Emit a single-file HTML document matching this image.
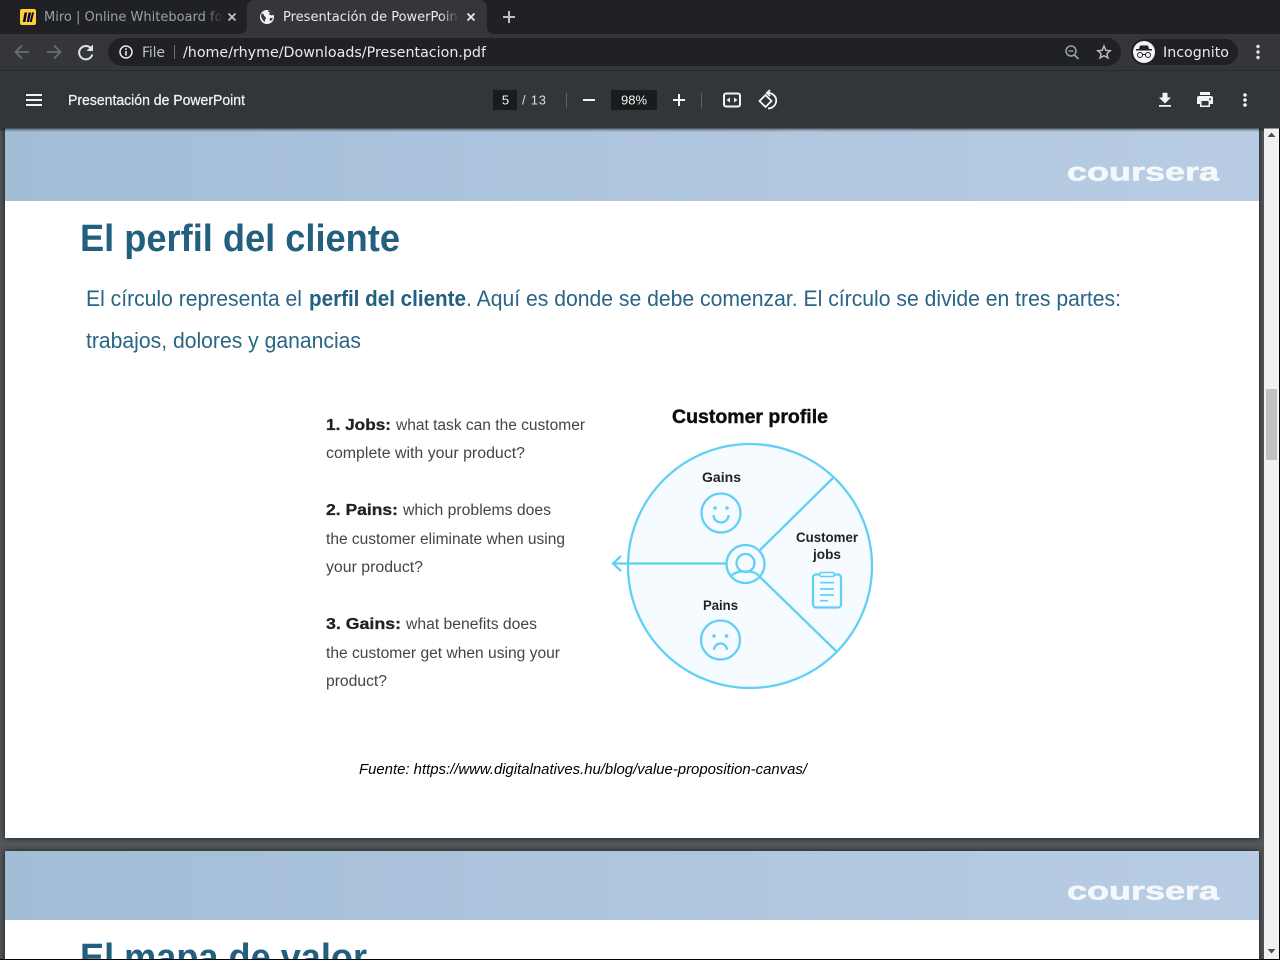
<!DOCTYPE html>
<html lang="es"><head><meta charset="utf-8"><title>Presentación de PowerPoint</title>
<style>
html,body{margin:0;padding:0;width:1280px;height:960px;overflow:hidden;background:#525659}
svg{display:block;position:absolute;left:0;top:0}
.d{font-family:"DejaVu Sans",sans-serif;font-size:13px}
.l{font-family:"Liberation Sans",sans-serif}
.t{font-family:"Liberation Sans",sans-serif;fill:#2a6585;font-size:22px}
.f{font-family:"Liberation Sans",sans-serif;fill:#444;font-size:15.500px}
.fb{font-family:"Liberation Sans",sans-serif;fill:#222;font-size:16px;font-weight:bold;stroke:#222;stroke-width:.3px}
.s{fill:none;stroke:#62d0f4;stroke-width:2.300}
.lab{font-family:"Liberation Sans",sans-serif;font-weight:bold;font-size:13.500px;fill:#222}
</style></head><body>
<svg width="1280" height="960" viewBox="0 0 1280 960" xmlns="http://www.w3.org/2000/svg">
<defs>
<linearGradient id="band" x1="0" x2="1" y1="0" y2="0"><stop offset="0" stop-color="#a3bdd7"/><stop offset="1" stop-color="#b8cde3"/></linearGradient>
<linearGradient id="f1" x1="0" x2="1" y1="0" y2="0"><stop offset="0" stop-color="#202124" stop-opacity="0"/><stop offset="1" stop-color="#202124"/></linearGradient>
<linearGradient id="f2" x1="0" x2="1" y1="0" y2="0"><stop offset="0" stop-color="#35363a" stop-opacity="0"/><stop offset="1" stop-color="#35363a"/></linearGradient>
<linearGradient id="tbs" x1="0" x2="0" y1="0" y2="1"><stop offset="0" stop-color="#000" stop-opacity=".5"/><stop offset="1" stop-color="#000" stop-opacity="0"/></linearGradient>
<filter id="sh" x="-5%" y="-5%" width="110%" height="110%"><feGaussianBlur stdDeviation="3"/></filter>
<filter id="soft"><feGaussianBlur stdDeviation=".35"/></filter>
<clipPath id="c1"><rect x="40" y="0" width="182" height="34"/></clipPath>
<clipPath id="c2"><rect x="280" y="0" width="179" height="34"/></clipPath>
</defs>

<!-- viewer -->
<rect x="0" y="128" width="1280" height="832" fill="#525659"/>
<rect x="5" y="120" width="1254" height="718" fill="#000" opacity=".7" filter="url(#sh)"/>
<rect x="5" y="851" width="1254" height="120" fill="#000" opacity=".7" filter="url(#sh)"/>
<rect x="5" y="120" width="1254" height="718" fill="#fff"/>
<rect x="5" y="120" width="1254" height="81" fill="url(#band)"/>
<rect x="5" y="851" width="1254" height="120" fill="#fff"/>
<rect x="5" y="851" width="1254" height="69" fill="url(#band)"/>

<!-- logos -->
<text class="l" x="1067" y="180.500" font-size="26" font-weight="bold" fill="#f4f7fb" stroke="#f4f7fb" stroke-width=".6" textLength="152" lengthAdjust="spacingAndGlyphs" filter="url(#soft)">coursera</text>
<text class="l" x="1067" y="899.500" font-size="26" font-weight="bold" fill="#f4f7fb" stroke="#f4f7fb" stroke-width=".6" textLength="152" lengthAdjust="spacingAndGlyphs" filter="url(#soft)">coursera</text>

<!-- page text -->
<text class="l" x="80" y="251" font-size="38" font-weight="bold" fill="#235f7f" textLength="320" lengthAdjust="spacingAndGlyphs">El perfil del cliente</text>
<text class="t" x="86" y="306" textLength="216" lengthAdjust="spacingAndGlyphs">El círculo representa el</text>
<text class="t" x="309" y="306" font-weight="bold" fill="#235f7f" textLength="157" lengthAdjust="spacingAndGlyphs" style="fill:#235f7f">perfil del cliente</text>
<text class="t" x="466" y="306" textLength="655" lengthAdjust="spacingAndGlyphs">. Aquí es donde se debe comenzar. El círculo se divide en tres partes:</text>
<text class="t" x="86" y="348" textLength="275" lengthAdjust="spacingAndGlyphs">trabajos, dolores y ganancias</text>
<text class="l" x="80" y="970" font-size="38" font-weight="bold" fill="#235f7f" textLength="287" lengthAdjust="spacingAndGlyphs">El mapa de valor</text>

<g filter="url(#soft)">
<text class="fb" x="326" y="430" textLength="65" lengthAdjust="spacingAndGlyphs">1. Jobs:</text>
<text class="f" x="396" y="430" textLength="189" lengthAdjust="spacingAndGlyphs">what task can the customer</text>
<text class="f" x="326" y="458" textLength="199" lengthAdjust="spacingAndGlyphs">complete with your product?</text>
<text class="fb" x="326" y="515" textLength="72" lengthAdjust="spacingAndGlyphs">2. Pains:</text>
<text class="f" x="403" y="515" textLength="148" lengthAdjust="spacingAndGlyphs">which problems does</text>
<text class="f" x="326" y="544" textLength="239" lengthAdjust="spacingAndGlyphs">the customer eliminate when using</text>
<text class="f" x="326" y="572" textLength="97" lengthAdjust="spacingAndGlyphs">your product?</text>
<text class="fb" x="326" y="629" textLength="75" lengthAdjust="spacingAndGlyphs">3. Gains:</text>
<text class="f" x="406" y="629" textLength="131" lengthAdjust="spacingAndGlyphs">what benefits does</text>
<text class="f" x="326" y="658" textLength="234" lengthAdjust="spacingAndGlyphs">the customer get when using your</text>
<text class="f" x="326" y="686" textLength="61" lengthAdjust="spacingAndGlyphs">product?</text>

<text class="l" x="672" y="423" font-size="19" font-weight="bold" fill="#111" stroke="#111" stroke-width=".4" textLength="156" lengthAdjust="spacingAndGlyphs">Customer profile</text>

<circle cx="750" cy="566" r="122" fill="#f5fbfe" stroke="#62d0f4" stroke-width="2.300"/>
<path class="s" d="M760 550L833 478M760 577L836 651M726 563.500H613M621 556L613 563.500L621 571"/>
<circle class="s" cx="745.500" cy="564" r="19" style="fill:#f5fbfe"/>
<circle class="s" cx="745.500" cy="563" r="9"/>
<path class="s" d="M731 576C735 572 741 571 745.500 571.500C750 571 756 572 760 577"/>
<text class="lab" x="702" y="482" textLength="39" lengthAdjust="spacingAndGlyphs">Gains</text>
<circle class="s" cx="721" cy="513" r="19.500"/>
<circle cx="715" cy="508" r="1.800" fill="#62d0f4"/><circle cx="727" cy="508" r="1.800" fill="#62d0f4"/>
<path class="s" d="M713.500 515A7.500 7.500 0 0 0 728.500 515"/>
<text class="lab" x="703" y="610" textLength="35" lengthAdjust="spacingAndGlyphs">Pains</text>
<circle class="s" cx="720.500" cy="640" r="19.500"/>
<circle cx="714" cy="636" r="1.800" fill="#62d0f4"/><circle cx="726.500" cy="636" r="1.800" fill="#62d0f4"/>
<path class="s" d="M714 650A6.500 6.500 0 0 1 727 650"/>
<text class="lab" x="796" y="542" textLength="62" lengthAdjust="spacingAndGlyphs">Customer</text>
<text class="lab" x="813" y="559" textLength="28" lengthAdjust="spacingAndGlyphs">jobs</text>
<rect class="s" x="813" y="574.500" width="28" height="33" rx="3"/>
<rect x="820" y="572.500" width="14" height="4" rx="1" fill="#f5fbfe" stroke="#62d0f4" stroke-width="1.500"/>
<path fill="none" stroke="#62d0f4" stroke-width="1.700" d="M820 582.700H834M820 589H834M820 595H834M820 600.700H828"/>
</g>

<text x="359" y="774" class="l" font-size="14.500" font-style="italic" fill="#000" textLength="448" lengthAdjust="spacingAndGlyphs">Fuente: https://www.digitalnatives.hu/blog/value-proposition-canvas/</text>

<!-- scrollbar -->
<rect x="1264" y="128" width="15" height="832" fill="#f1f1f1"/>
<rect x="1279" y="128" width="1" height="832" fill="#000"/>
<rect x="1266" y="389" width="11" height="71" fill="#c1c1c1"/>
<path d="M1271.500 132.500L1275.500 137H1267.500Z" fill="#505050"/>
<path d="M1267.500 949H1275.500L1271.500 953.500Z" fill="#505050"/>
<rect x="0" y="959" width="1280" height="1" fill="#000"/>

<!-- pdf toolbar -->
<rect x="0" y="128" width="1264" height="4" fill="url(#tbs)"/>
<rect x="0" y="71" width="1280" height="57.500" fill="#323639"/>
<path d="M26 94h16v2H26zM26 99h16v2H26zM26 104h16v2H26z" fill="#f1f3f4"/>
<text class="l" x="68" y="105" font-size="15" fill="#f1f3f4" stroke="#f1f3f4" stroke-width=".25" textLength="177" lengthAdjust="spacingAndGlyphs">Presentación de PowerPoint</text>
<rect x="493" y="90" width="24" height="20" fill="#191b1c"/>
<text class="l" x="505.500" y="104.500" font-size="13" fill="#f1f3f4" text-anchor="middle">5</text>
<text class="l" x="522" y="104.500" font-size="13" fill="#dadce0" textLength="24">/ 13</text>
<rect x="566" y="93" width="1" height="15" fill="#5f6368"/>
<rect x="583" y="99" width="12" height="2" fill="#f1f3f4"/>
<rect x="611" y="90" width="46" height="20" fill="#191b1c"/>
<text class="l" x="634" y="104.500" font-size="13" fill="#f1f3f4" text-anchor="middle">98%</text>
<path d="M673 99h5v-5h2v5h5v2h-5v5h-2v-5h-5z" fill="#f1f3f4"/>
<rect x="701" y="93" width="1" height="15" fill="#5f6368"/>
<rect x="724" y="93.500" width="16" height="13" rx="2" fill="none" stroke="#f1f3f4" stroke-width="2"/>
<path d="M730 97.500V102.500L726.500 100ZM734 97.500V102.500L737.500 100Z" fill="#f1f3f4"/>
<path d="M759.500 101L765.500 95L771.500 101L765.500 107Z" fill="none" stroke="#f1f3f4" stroke-width="1.800"/>
<path d="M767 93C772 92.500 776.200 96 776.200 100.500C776.200 105 772.500 108.500 768 108.500" fill="none" stroke="#f1f3f4" stroke-width="1.800"/>
<path d="M770 90L766.800 93L770 96" fill="none" stroke="#f1f3f4" stroke-width="1.800"/>
<path d="M1171 97.500h-3.500V92.700h-5v4.800H1159l6 6zM1159 105v1.800h12V105z" fill="#f1f3f4"/>
<path fill-rule="evenodd" d="M1200 92h10v3h-10zM1199 96h12a2 2 0 0 1 2 2v6h-3v3h-10v-3h-3v-6a2 2 0 0 1 2-2zM1201.500 101v4.500h7V101zM1210 98.200a1 1 0 1 0 .01 0z" fill="#f1f3f4"/>
<circle cx="1245" cy="95" r="1.800" fill="#f1f3f4"/><circle cx="1245" cy="100" r="1.800" fill="#f1f3f4"/><circle cx="1245" cy="105" r="1.800" fill="#f1f3f4"/>

<!-- browser toolbar -->
<rect x="0" y="0" width="1280" height="34" fill="#202124"/>
<rect x="0" y="34" width="1280" height="36" fill="#35363a"/>
<rect x="0" y="70" width="1280" height="1" fill="#2a2b2e"/>

<!-- tabs -->
<path d="M239 34C244 34 247 31 247 27V8C247 3 250 0 255 0H479C484 0 487 3 487 8V27C487 31 490 34 495 34Z" fill="#35363a"/>
<rect x="20" y="9" width="16" height="16" rx="2" fill="#ffd02f"/>
<path d="M24.500 12.500h2.600l-1.600 9.500h-2.700zM28.500 12.500h2.600l-2 9.500h-2.300zM32 12.500h2l-2.200 9.500h-2z" fill="#050038"/>
<g clip-path="url(#c1)"><text class="d" x="44" y="21" fill="#9aa0a6">Miro | Online Whiteboard for Visual</text></g>
<rect x="205" y="6" width="18" height="22" fill="url(#f1)"/>
<path d="M228.500 13.500l7 7M235.500 13.500l-7 7" stroke="#bdc1c6" stroke-width="1.800" fill="none"/>
<circle cx="267" cy="17" r="7" fill="#f1f3f4"/>
<path d="M261.500 13.500c1.500 0 2.500 1 2.500 2s2 1 2 2.500c0 1-1 1-1 2.500v1.300l-1.500-.8c-1-1-1.500-3-2.500-4zM268 10.500c0 1.500 1 2 2 2l-1 2 3 1 1.800-1c-1-2-3-4-5.800-4zM270 18h3l-2 3-1.500-1z" fill="#35363a"/>
<g clip-path="url(#c2)"><text class="d" x="283" y="21" fill="#e8eaed">Presentación de PowerPoint</text></g>
<rect x="441" y="6" width="18" height="22" fill="url(#f2)"/>
<path d="M467.500 13.500l7 7M474.500 13.500l-7 7" stroke="#e8eaed" stroke-width="1.800" fill="none"/>
<path d="M503 16h5v-5h2v5h5v2h-5v5h-2v-5h-5z" fill="#bdc1c6"/>

<!-- nav -->
<g fill="none" stroke-width="1.800">
<path d="M29 52H16M22 45.500L15.500 52L22 58.500" stroke="#696c70"/>
<path d="M47 52H60M54 45.500L60.500 52L54 58.500" stroke="#696c70"/>
<path d="M92 50A6.700 6.700 0 1 0 92.300 54.500" stroke="#dee1e6" stroke-width="2"/>
</g>
<path d="M93 44.500V51H86.500Z" fill="#dee1e6"/>
<rect x="108" y="38" width="1013" height="28" rx="14" fill="#202124"/>
<circle cx="126" cy="52" r="6" fill="none" stroke="#e8eaed" stroke-width="1.500"/>
<rect x="125.200" y="51" width="1.600" height="4.500" fill="#e8eaed"/><rect x="125.200" y="48.300" width="1.600" height="1.600" fill="#e8eaed"/>
<text class="d" x="142" y="57" fill="#bdc1c6" style="font-size:14px" textLength="23">File</text>
<rect x="174" y="45" width="1" height="14" fill="#6e7175"/>
<text class="d" x="183" y="57" fill="#e8eaed" style="font-size:14px" textLength="303" lengthAdjust="spacingAndGlyphs">/home/rhyme/Downloads/Presentacion.pdf</text>
<circle cx="1071" cy="51" r="5" fill="none" stroke="#9aa0a6" stroke-width="1.500"/>
<path d="M1074.500 55L1078.500 59" stroke="#9aa0a6" stroke-width="1.800"/>
<path d="M1068.500 51H1073.500" stroke="#9aa0a6" stroke-width="1.300"/>
<path d="M1104 46L1105.800 50.300L1110.300 50.700L1106.900 53.600L1107.900 58L1104 55.700L1100.100 58L1101.100 53.600L1097.700 50.700L1102.200 50.300Z" fill="none" stroke="#bdc1c6" stroke-width="1.400"/>

<rect x="1131" y="39" width="107" height="26" rx="13" fill="#202124"/>
<circle cx="1144" cy="52" r="11" fill="#f1f3f4"/>
<path d="M1140 45.500h8l1 3.500h3v1.500h-16V49h3z" fill="#202124"/>
<circle cx="1140" cy="55" r="2.500" fill="none" stroke="#202124" stroke-width="1"/>
<circle cx="1148" cy="55" r="2.500" fill="none" stroke="#202124" stroke-width="1"/>
<path d="M1142.500 54.500h3" stroke="#202124" stroke-width="1"/>
<text class="d" x="1163" y="57" fill="#e8eaed" style="font-size:14px" textLength="66" lengthAdjust="spacingAndGlyphs">Incognito</text>
<circle cx="1258" cy="46.500" r="1.700" fill="#dee1e6"/><circle cx="1258" cy="52" r="1.700" fill="#dee1e6"/><circle cx="1258" cy="57.500" r="1.700" fill="#dee1e6"/>
</svg>
</body></html>
